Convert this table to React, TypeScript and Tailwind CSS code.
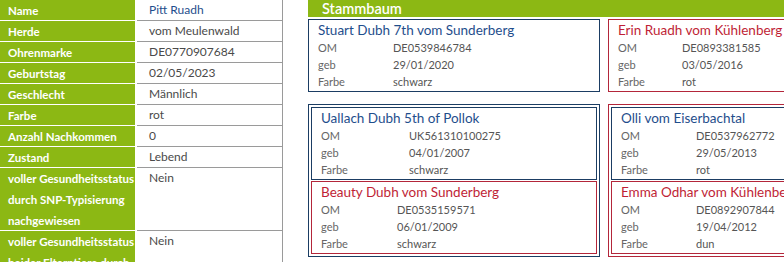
import * as React from "react"

// Detail page of one animal: data table on the left, pedigree on the right.

const FONT = "font-['Lato','Open_Sans',sans-serif]"

type Row = { label: string[]; value: string; accent?: boolean }

const ROWS: Row[] = [
  { label: ["Name"], value: "Pitt Ruadh", accent: true },
  { label: ["Herde"], value: "vom Meulenwald" },
  { label: ["Ohrenmarke"], value: "DE0770907684" },
  { label: ["Geburtstag"], value: "02/05/2023" },
  { label: ["Geschlecht"], value: "Männlich" },
  { label: ["Farbe"], value: "rot" },
  { label: ["Anzahl Nachkommen"], value: "0" },
  { label: ["Zustand"], value: "Lebend" },
  {
    label: ["voller Gesundheitsstatus", "durch SNP-Typisierung", "nachgewiesen"],
    value: "Nein",
  },
  {
    label: ["voller Gesundheitsstatus", "beider Elterntiere durch", "SNP-Typisierung"],
    value: "Nein",
  },
]

type Animal = {
  name: string
  om: string
  geb: string
  farbe: string
  male: boolean
  labelW: string
}

function DataTable() {
  return (
    <div className="flex w-[283px] shrink-0 flex-col">
      {ROWS.map((row, i) => (
        <div key={i} className="flex">
          <div className="w-[135px] shrink-0 bg-[#8cb814] pl-[8px] text-[11.5px] font-bold leading-[21px] text-white shadow-[inset_0_-1px_0_white]">
            {row.label.map((l) => (
              <div key={l} className="whitespace-nowrap">
                {l}
              </div>
            ))}
          </div>
          <div
            className={
              "ml-[2px] flex-1 border-r border-b border-[#9a9a9a] pl-[12px] text-[12px] leading-[20px] " +
              (row.accent ? "text-[#1f4e8c]" : "text-[#4a4a4a]")
            }
          >
            {row.value}
          </div>
        </div>
      ))}
    </div>
  )
}

function Card({ a }: { a: Animal }) {
  const border = a.male ? "border-[#1b3d63]" : "border-[#b3263a]"
  const title = a.male ? "text-[#1f4e8c]" : "text-[#c01f36]"
  return (
    <div className={"border px-[9px] " + border}>
      <div className={"h-[20px] whitespace-nowrap text-[13.5px] leading-[20px] " + title}>
        {a.name}
      </div>
      {[
        ["OM", a.om],
        ["geb", a.geb],
        ["Farbe", a.farbe],
      ].map(([k, v]) => (
        <div key={k} className="flex h-[17px] items-center text-[11px] text-[#555]">
          <span className={"shrink-0 text-[#666] " + a.labelW}>{k}</span>
          <span>{v}</span>
        </div>
      ))}
    </div>
  )
}

function Group({ male, children }: { male: boolean; children: React.ReactNode }) {
  const border = male ? "border-[#1b3d63]" : "border-[#b3263a]"
  return (
    <div className={"flex flex-col gap-[1px] border p-[2px] " + border}>{children}</div>
  )
}

const STUART: Animal = { name: "Stuart Dubh 7th vom Sunderberg", om: "DE0539846784", geb: "29/01/2020", farbe: "schwarz", male: true, labelW: "w-[75px]" }
const ERIN: Animal = { name: "Erin Ruadh vom Kühlenberg", om: "DE0893381585", geb: "03/05/2016", farbe: "rot", male: false, labelW: "w-[64px]" }
const UALLACH: Animal = { name: "Uallach Dubh 5th of Pollok", om: "UK561310100275", geb: "04/01/2007", farbe: "schwarz", male: true, labelW: "w-[88px]" }
const BEAUTY: Animal = { name: "Beauty Dubh vom Sunderberg", om: "DE0535159571", geb: "06/01/2009", farbe: "schwarz", male: false, labelW: "w-[76px]" }
const OLLI: Animal = { name: "Olli vom Eiserbachtal", om: "DE0537962772", geb: "29/05/2013", farbe: "rot", male: true, labelW: "w-[75px]" }
const EMMA: Animal = { name: "Emma Odhar vom Kühlenberg", om: "DE0892907844", geb: "19/04/2012", farbe: "dun", male: false, labelW: "w-[75px]" }

function Pedigree() {
  return (
    <div className="ml-[25px] flex min-w-0 flex-1 flex-col overflow-hidden">
      <div className="h-[17px] w-full bg-[#8cb814] pl-[14px] text-[14.5px] font-semibold leading-[17px] text-white">
        Stammbaum
      </div>
      <div className="mt-[2px] flex w-[592px] gap-[8px]">
        <div className="flex w-[292px] shrink-0 flex-col gap-[12px]">
          <Card a={STUART} />
          <Group male>
            <Card a={UALLACH} />
            <Card a={BEAUTY} />
          </Group>
        </div>
        <div className="flex w-[292px] shrink-0 flex-col gap-[12px]">
          <Card a={ERIN} />
          <Group male={false}>
            <Card a={OLLI} />
            <Card a={EMMA} />
          </Group>
        </div>
      </div>
    </div>
  )
}

export default function App() {
  return (
    <div className={"flex h-[262px] w-[784px] overflow-hidden bg-white " + FONT}>
      <DataTable />
      <Pedigree />
    </div>
  )
}
